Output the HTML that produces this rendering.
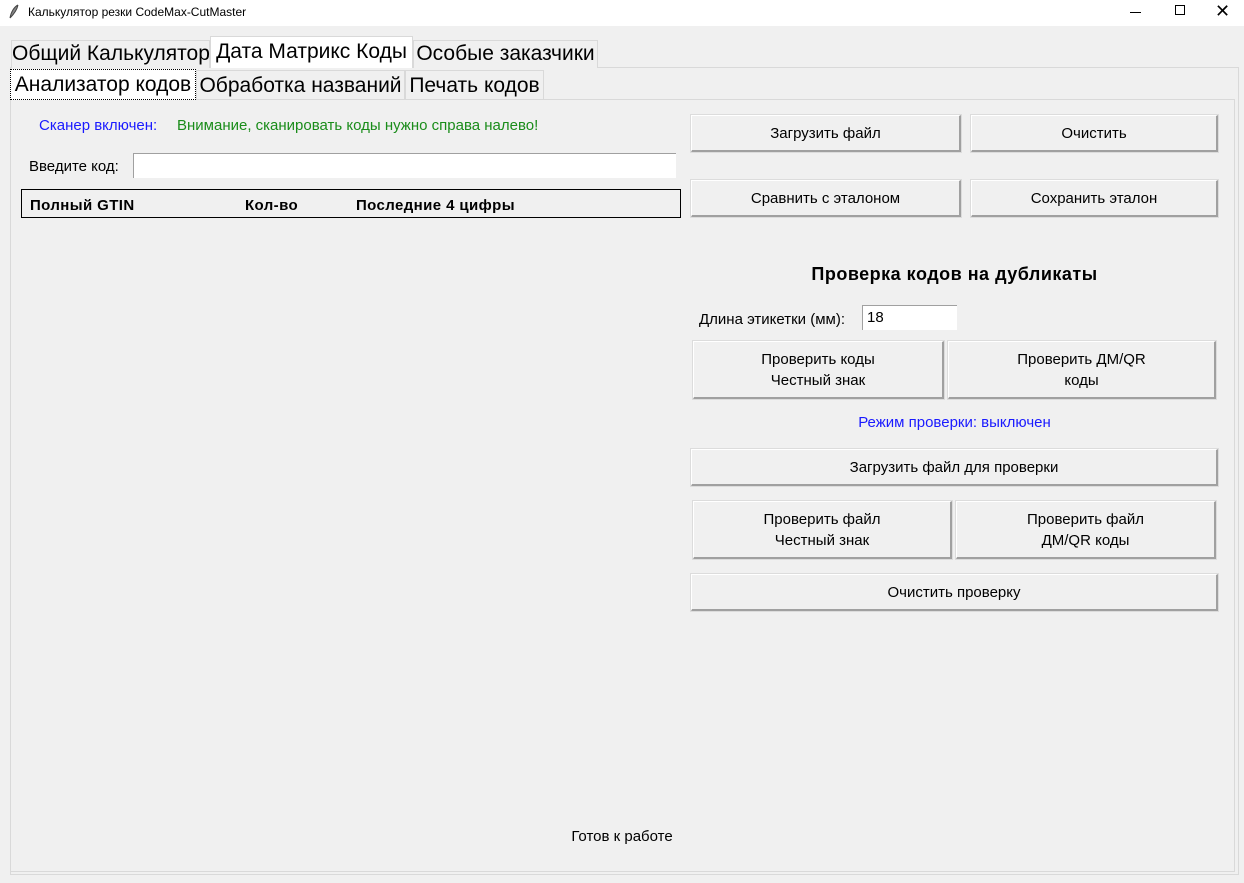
<!DOCTYPE html><html><head><meta charset="utf-8"><style>
*{margin:0;padding:0;box-sizing:border-box}
body{width:1244px;height:883px;background:#f0f0f0;font-family:"Liberation Sans",sans-serif;position:relative;overflow:hidden;font-size:15px;color:#000}
.a{position:absolute;white-space:nowrap}
.btn{position:absolute;background:#f0f0f0;border:1px solid #fff;border-right:2px solid #a0a0a0;border-bottom:2px solid #a0a0a0;outline:1px solid #dcdcdc;display:flex;align-items:center;justify-content:center;text-align:center;font-size:15px;line-height:21px}
.tab{position:absolute;border:1px solid #d9d9d9;border-bottom:none;font-size:21px;line-height:26px;background:#f0f0f0;text-align:center;white-space:nowrap}
</style></head><body>
<div class="a" style="left:0;top:0;width:1244px;height:26px;background:#fff"></div>
<svg class="a" style="left:8px;top:4px" width="12" height="16"><path d="M10 1 C6 3 3 8 2 14 M10 1 C9 6 6 10 2 14" stroke="#444" fill="#888" stroke-width="1"/></svg>
<div class="a" style="left:28px;top:5px;font-size:12px">Калькулятор резки CodeMax-CutMaster</div>
<div class="a" style="left:1130px;top:12px;width:11px;height:1px;background:#000"></div>
<div class="a" style="left:1175px;top:5px;width:10px;height:10px;border:1px solid #000"></div>
<div class="a" style="left:1215px;top:0;font-size:18px;line-height:22px">✕</div>

<div class="a" style="left:10px;top:67px;width:1229px;height:808px;border:1px solid #d9d9d9"></div>
<div class="tab" style="left:11px;top:40px;width:199px;height:28px">Общий Калькулятор</div>
<div class="tab" style="left:210px;top:36px;width:203px;height:32px;background:#fff;line-height:30px">Дата Матрикс Коды</div>
<div class="tab" style="left:413px;top:40px;width:185px;height:28px">Особые заказчики</div>

<div class="a" style="left:10px;top:99px;width:1225px;height:773px;border:1px solid #d9d9d9"></div>
<div class="tab" style="left:10px;top:69px;width:186px;height:31px;background:#fff;line-height:30px;border:1px dotted #000">Анализатор кодов</div>
<div class="tab" style="left:196px;top:70px;width:209px;height:29px;line-height:30px">Обработка названий</div>
<div class="tab" style="left:405px;top:70px;width:139px;height:29px;line-height:30px">Печать кодов</div>

<div class="a" style="left:39px;top:117px;color:#1a1aff">Сканер включен:</div>
<div class="a" style="left:177px;top:117px;color:#1a8c1a">Внимание, сканировать коды нужно справа налево!</div>
<div class="a" style="left:29px;top:158px">Введите код:</div>
<div class="a" style="left:133px;top:153px;width:543px;height:25px;background:#fff;border-top:1px solid #a0a0a0;border-left:1px solid #a0a0a0"></div>
<div class="a" style="left:21px;top:189px;width:660px;height:29px;border:1px solid #000;background:#f0f0f0"></div>
<div class="a" style="left:30px;top:197px;font-weight:bold;font-size:15px;letter-spacing:0.4px">Полный GTIN</div>
<div class="a" style="left:245px;top:197px;font-weight:bold;font-size:15px;letter-spacing:0.4px">Кол-во</div>
<div class="a" style="left:356px;top:197px;font-weight:bold;font-size:15px;letter-spacing:0.4px">Последние 4 цифры</div>

<div class="btn" style="left:691px;top:115px;width:270px;height:37px">Загрузить файл</div>
<div class="btn" style="left:971px;top:115px;width:247px;height:37px">Очистить</div>
<div class="btn" style="left:691px;top:180px;width:270px;height:37px">Сравнить с эталоном</div>
<div class="btn" style="left:971px;top:180px;width:247px;height:37px">Сохранить эталон</div>
<div class="a" style="left:691px;top:264px;width:527px;text-align:center;font-weight:bold;font-size:18px;letter-spacing:0.5px">Проверка кодов на дубликаты</div>
<div class="a" style="left:699px;top:311px">Длина этикетки (мм):</div>
<div class="a" style="left:862px;top:305px;width:95px;height:25px;background:#fff;border-top:1px solid #a0a0a0;border-left:1px solid #a0a0a0;padding:3px 4px">18</div>
<div class="btn" style="left:693px;top:341px;width:251px;height:58px">Проверить коды<br>Честный знак</div>
<div class="btn" style="left:948px;top:341px;width:268px;height:58px">Проверить ДМ/QR<br>коды</div>
<div class="a" style="left:691px;top:414px;width:527px;text-align:center;color:#1a1aff">Режим проверки: выключен</div>
<div class="btn" style="left:691px;top:449px;width:527px;height:37px">Загрузить файл для проверки</div>
<div class="btn" style="left:693px;top:501px;width:259px;height:58px">Проверить файл<br>Честный знак</div>
<div class="btn" style="left:956px;top:501px;width:260px;height:58px">Проверить файл<br>ДМ/QR коды</div>
<div class="btn" style="left:691px;top:574px;width:527px;height:37px">Очистить проверку</div>
<div class="a" style="left:0;top:828px;width:1244px;text-align:center">Готов к работе</div>
</body></html>
